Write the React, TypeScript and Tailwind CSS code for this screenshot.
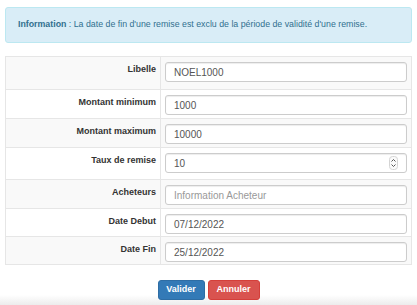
import React from 'react';

const rows = [
  { label: 'Libelle', value: 'NOEL1000', h: 'h-[32px]' },
  { label: 'Montant minimum', value: '1000', h: 'h-[29px]' },
  { label: 'Montant maximum', value: '10000', h: 'h-[29px]' },
  { label: 'Taux de remise', value: '10', h: 'h-[32px]', spin: true },
  { label: 'Acheteurs', placeholder: 'Information Acheteur', h: 'h-[29px]' },
  { label: 'Date Debut', value: '07/12/2022', h: 'h-[28px]' },
  { label: 'Date Fin', value: '25/12/2022', h: 'h-[28px]' }
];

const Spinner = () => (
  <svg width="9" height="14" viewBox="0 0 9 14" className="shrink-0">
    <rect x="0.5" y="0.5" width="8" height="13" rx="3" fill="#fafafa" stroke="#d4d4d4" />
    <path d="M2.5 5.5 L4.5 3.5 L6.5 5.5" fill="none" stroke="#555" strokeWidth="1" />
    <path d="M2.5 8.5 L4.5 10.5 L6.5 8.5" fill="none" stroke="#555" strokeWidth="1" />
  </svg>
);

export default function App() {
  return (
    <div className="w-[417px] h-[305px] bg-white overflow-hidden flex flex-col font-['Liberation_Sans',Arial,sans-serif]">
      <div className="px-[5px] pt-[7px]">
        <div className="h-[36px] bg-[#d9edf7] border border-[#bce8f1] rounded-[3px] flex items-center pl-[12px] text-[8.8px] text-[#31708f]">
          <span className="font-bold">Information</span>
          <span>&nbsp;: La date de fin d'une remise est exclu de la période de validité d'une remise.</span>
        </div>
      </div>

      <div className="px-[5px] pt-[13px]">
        <div className="border border-[#e6e6e6]">
          {rows.map((r, i) => (
            <div
              key={r.label}
              className={`flex ${r.h} ${i > 0 ? 'border-t border-[#e6e6e6]' : ''} ${i % 2 === 0 ? 'bg-[#f9f9f9]' : 'bg-white'}`}
            >
              <div className="w-[155px] shrink-0 text-right pr-[4px] pt-[6px] text-[9px] font-bold text-[#333] border-r border-[#e6e6e6]">
                {r.label}
              </div>
              <div className="flex-1 pl-[4px] pr-[4px] pt-[5px]">
                <div className="h-[20px] bg-white border border-[#cccccc] rounded-[3px] shadow-[inset_0_1px_1px_rgba(0,0,0,0.075)] flex items-center pl-[8px] pr-[8px] text-[10px]">
                  {r.value ? (
                    <span className="flex-1 text-[#555]">{r.value}</span>
                  ) : (
                    <span className="flex-1 text-[#999]">{r.placeholder}</span>
                  )}
                  {r.spin && <Spinner />}
                </div>
              </div>
            </div>
          ))}
        </div>
      </div>

      <div className="flex-1 flex justify-center items-start gap-[3px] pt-[15px] bg-gradient-to-b from-white from-75% to-[#ececec]">
        <button className="w-[47px] h-[20px] rounded-[3px] bg-[#337ab7] border border-[#2e6da4] text-white text-[9px] font-bold">
          Valider
        </button>
        <button className="w-[52px] h-[20px] rounded-[3px] bg-[#d9534f] border border-[#d43f3a] text-white text-[9px] font-bold">
          Annuler
        </button>
      </div>
    </div>
  );
}
